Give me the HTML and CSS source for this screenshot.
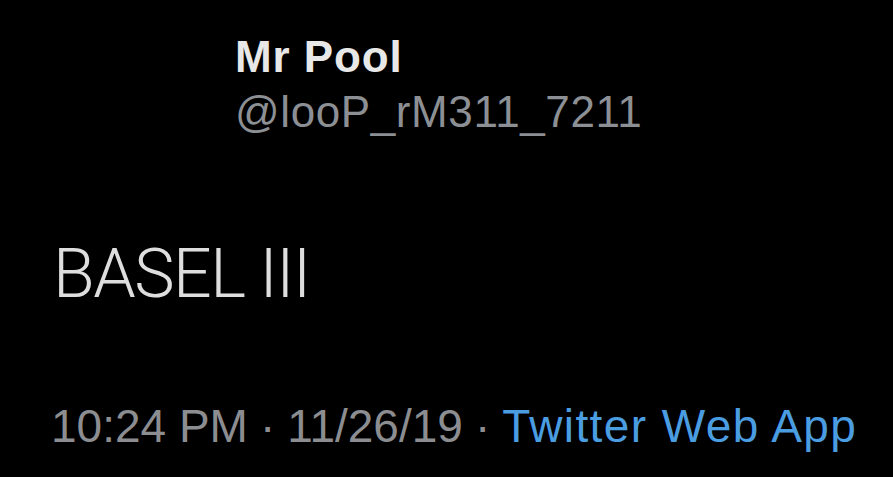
FILE: index.html
```html
<!DOCTYPE html>
<html lang="en">
<head>
<meta charset="utf-8">
<title>Tweet</title>
<link rel="stylesheet" href="styles.css">
</head>
<body>
<main class="tweet">
  <header class="author">
    <div class="name">Mr Pool</div>
    <div class="handle">@looP_rM311_7211</div>
  </header>
  <p class="text">BASEL III</p>
  <footer class="meta">
    <span class="time">10:24 PM</span>
    <span class="sep">·</span>
    <span class="date">11/26/19</span>
    <span class="sep">·</span>
    <span class="source">Twitter Web App</span>
  </footer>
</main>
</body>
</html>
```
FILE: styles.css
```css
html, body {
  margin: 0;
  padding: 0;
  background: #000;
  width: 893px;
  height: 477px;
  overflow: hidden;
}
.tweet {
  display: flex;
  flex-direction: column;
  padding: 35px 0 0 51px;
  font-family: "Liberation Sans", Arial, sans-serif;
}
.author {
  display: flex;
  flex-direction: column;
  gap: 11px;
  padding-left: 184px;
}
.name {
  font-weight: 700;
  font-size: 44px;
  line-height: 44px;
  letter-spacing: 0.9px;
  color: #e8e8e8;
}
.handle {
  font-size: 44px;
  line-height: 44px;
  letter-spacing: 0.6px;
  color: #8c8f94;
}
.text {
  margin: 106px 0 0 2px;
  font-family: Roboto, "Liberation Sans", sans-serif;
  font-weight: 300;
  font-size: 68px;
  line-height: 68px;
  letter-spacing: -1.5px;
  color: #dedede;
}
.meta {
  margin-top: 95px;
  display: flex;
  gap: 12px;
  font-size: 46px;
  line-height: 46px;
  color: #8c8d91;
  white-space: nowrap;
}
.source {
  color: #4b9de2;
  letter-spacing: 1.4px;
}
```
